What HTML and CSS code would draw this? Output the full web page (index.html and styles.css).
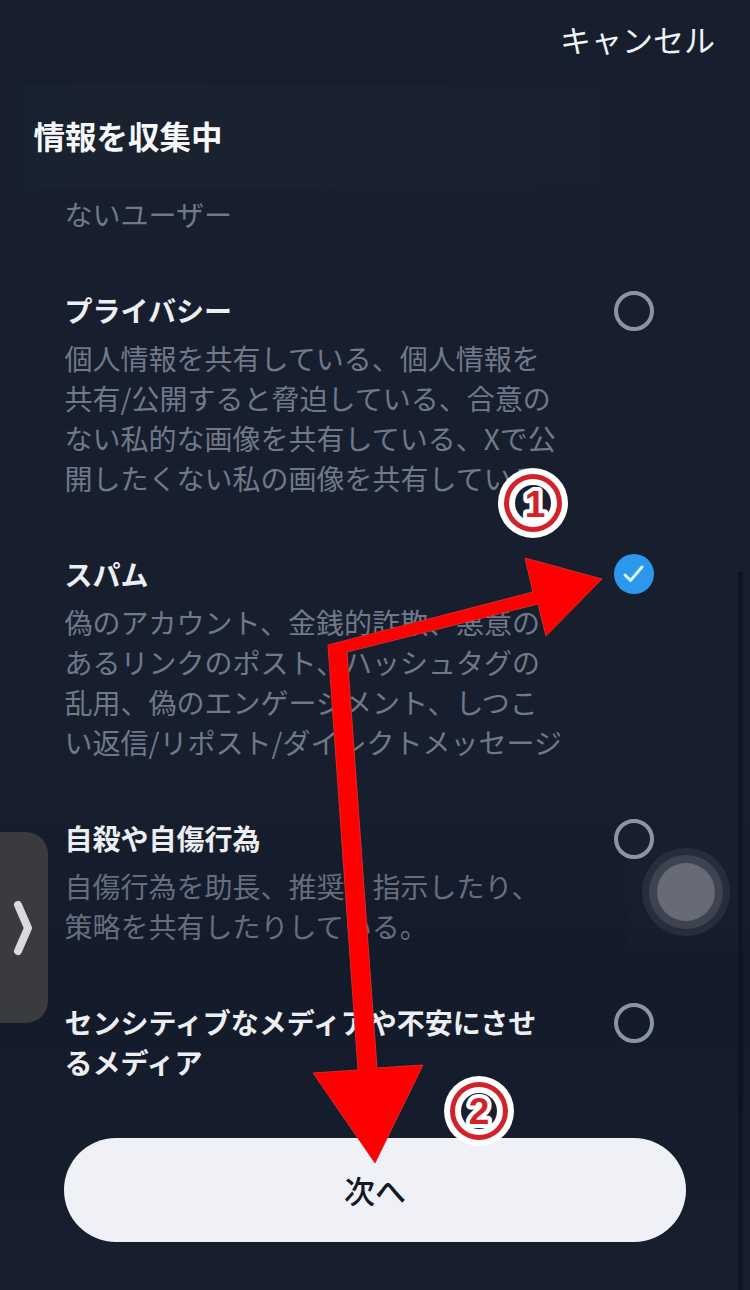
FILE: index.html
```html
<!DOCTYPE html>
<html lang="ja">
<head>
<meta charset="utf-8">
<title>情報を収集中</title>
<link rel="stylesheet" href="styles.css">
</head>
<body>
<div class="screen">
  <header class="header">
    <div class="cancel-row"><span class="cancel">キャンセル</span></div>
    <div class="title-band"><h1 class="page-title">情報を収集中</h1></div>
  </header>
  <main class="list">
    <p class="desc">ないユーザー</p>
    <section class="option">
      <div class="option-text">
        <h2 class="option-title">プライバシー</h2>
        <p class="desc">個人情報を共有している、個人情報を<br>共有/公開すると脅迫している、合意の<br>ない私的な画像を共有している、Xで公<br>開したくない私の画像を共有している</p>
      </div>
      <span class="radio"></span>
    </section>
    <section class="option">
      <div class="option-text">
        <h2 class="option-title">スパム</h2>
        <p class="desc">偽のアカウント、金銭的詐欺、悪意の<br>あるリンクのポスト、ハッシュタグの<br>乱用、偽のエンゲージメント、しつこ<br>い返信/リポスト/ダイレクトメッセージ</p>
      </div>
      <span class="radio radio-checked">
        <svg viewBox="0 0 40 40" class="check"><path d="M11 21l5.5 5.5L28 13" /></svg>
      </span>
    </section>
    <section class="option">
      <div class="option-text">
        <h2 class="option-title">自殺や自傷行為</h2>
        <p class="desc desc-dim">自傷行為を助長、推奨、指示したり、<br>策略を共有したりしている。</p>
      </div>
      <span class="radio"></span>
    </section>
    <section class="option">
      <div class="option-text">
        <h2 class="option-title">センシティブなメディアや不安にさせ<br>るメディア</h2>
      </div>
      <span class="radio"></span>
    </section>
  </main>
  <footer class="footer"><button class="next">次へ</button></footer>

  <div class="scrollbar"></div>
  <div class="side-handle">
    <svg viewBox="0 0 24 56" class="chevron"><path d="M6 5l10 23L6 51" /></svg>
  </div>
  <div class="touch-glow"></div>
  <div class="touch"><div class="touch-mid"><div class="touch-core"></div></div></div>

  <svg class="annotations" viewBox="0 0 750 1290">
    <polygon class="arrow" points="602,579 525,558 533,592 328,645 358,1070 313,1073 375,1163 423,1065 377,1068 347,652 538,604 546,636"/>
    <g>
      <circle cx="533" cy="503" r="35" class="badge-bg"/>
      <circle cx="533" cy="503" r="29" class="badge-ring"/>
      <circle cx="533" cy="503" r="24" class="badge-bg"/>
      <circle cx="533" cy="503" r="18" class="badge-in"/>
      <text x="535" y="517" class="badge-num">1</text>
    </g>
    <g>
      <circle cx="479" cy="1111" r="35" class="badge-bg"/>
      <circle cx="479" cy="1111" r="29" class="badge-ring"/>
      <circle cx="479" cy="1111" r="24" class="badge-bg"/>
      <circle cx="479" cy="1111" r="18" class="badge-in"/>
      <text x="479" y="1124" class="badge-num">2</text>
    </g>
  </svg>
</div>
</body>
</html>
```
FILE: styles.css
```css
* { box-sizing: border-box; }
html, body { margin: 0; padding: 0; }
body {
  background: #171f2e;
  font-family: "Noto Sans CJK JP", "Noto Sans", sans-serif;
}
.screen {
  position: relative;
  width: 750px;
  height: 1290px;
  overflow: hidden;
  background: linear-gradient(180deg, #171f2e 0%, #171f2e 60%, #131a2a 76%, #151c2c 86%, #171f2e 100%);
}
.header { display: flex; flex-direction: column; }
.cancel-row {
  display: flex;
  justify-content: flex-end;
  height: 80px;
  padding-right: 35px;
  margin-bottom: 5px;
}
.cancel {
  color: #f2f3f6;
  font-size: 31px;
  line-height: 78px;
}
.title-band {
  height: 105px;
  margin: 0 50px 0 24px;
  padding: 29px 0 0 9.5px;
  background: linear-gradient(90deg, #182130 0%, #1a2230 12%, #192130 55%, #182030 85%, #171f2e 100%);
}
.page-title {
  margin: 0;
  color: #f6f7f9;
  font-size: 31.5px;
  font-weight: 700;
  line-height: 42px;
}
.list {
  display: flex;
  flex-direction: column;
  gap: 56px;
  height: 888px;
  margin-top: 4px;
  padding: 0 96px 0 64.5px;
  overflow: hidden;
}
.option {
  display: flex;
  justify-content: space-between;
  align-items: flex-start;
}
.option-text {
  display: flex;
  flex-direction: column;
  gap: 8px;
}
.option-title {
  margin: 0;
  color: #eceef2;
  font-size: 28px;
  font-weight: 700;
  line-height: 40px;
  white-space: nowrap;
}
.desc {
  margin: 0;
  color: #707988;
  font-size: 28px;
  font-weight: 400;
  line-height: 40px;
  white-space: nowrap;
}
.desc-dim { color: #666e7e; }
.radio {
  flex: none;
  display: block;
  width: 40px;
  height: 40px;
  margin-top: 1px;
  border: 4px solid #8b94a5;
  border-radius: 50%;
}
.radio-checked {
  margin-top: 0;
  border: 0;
  background: #2b98ec;
}
.check { display: block; width: 40px; height: 40px; }
.check path {
  fill: none;
  stroke: #d8f6ff;
  stroke-width: 3;
  stroke-linecap: round;
  stroke-linejoin: round;
}
.footer {
  padding: 0 64px;
  margin-top: 56px;
}
.next {
  display: block;
  width: 622px;
  height: 104px;
  border: 0;
  border-radius: 52px;
  background: #eff1f7;
  color: #121826;
  font-family: inherit;
  font-size: 31px;
  font-weight: 500;
  padding: 0 0 2px;
}
.scrollbar {
  position: absolute;
  left: 738px;
  top: 572px;
  bottom: 0;
  width: 5px;
  background: #0f1423;
}
.side-handle {
  position: absolute;
  left: 0;
  top: 832px;
  width: 48px;
  height: 191px;
  display: flex;
  align-items: center;
  justify-content: center;
  background: #3a3b3f;
  border-radius: 0 22px 22px 0;
}
.chevron { display: block; width: 24px; height: 56px; }
.chevron path {
  fill: none;
  stroke: #d9d9e2;
  stroke-width: 8;
  stroke-linecap: round;
  stroke-linejoin: round;
}
.touch-glow {
  position: absolute;
  left: 626px;
  top: 830px;
  width: 112px;
  height: 122px;
  background: rgba(255, 255, 255, 0.012);
}
.touch {
  position: absolute;
  left: 642px;
  top: 848px;
  width: 88px;
  height: 88px;
  padding: 7px;
  border-radius: 50%;
  background: #272d3b;
}
.touch-mid {
  width: 74px;
  height: 74px;
  padding: 8px;
  border-radius: 50%;
  background: #3d4350;
}
.touch-core {
  width: 58px;
  height: 58px;
  border-radius: 50%;
  background: #686b76;
}
.annotations {
  position: absolute;
  left: 0;
  top: 0;
  width: 750px;
  height: 1290px;
  pointer-events: none;
}
.arrow {
  fill: #fe0000;
  stroke: #d92a2a;
  stroke-width: 1;
}
.badge-bg { fill: #ffffff; }
.badge-ring { fill: #d1222a; }
.badge-in { fill: #1a2030; }
.badge-num {
  fill: #d1222a;
  stroke: #ffffff;
  stroke-width: 8px;
  paint-order: stroke;
  stroke-linejoin: round;
  font-family: "Liberation Sans", sans-serif;
  font-size: 37px;
  font-weight: 700;
  text-anchor: middle;
}
```
